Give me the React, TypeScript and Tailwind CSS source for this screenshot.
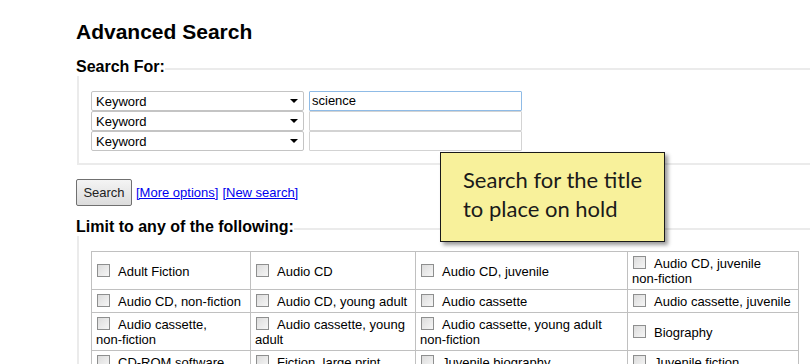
import React from 'react';

const rows: string[][] = [
  ['Adult Fiction', 'Audio CD', 'Audio CD, juvenile', 'Audio CD, juvenile non-fiction'],
  ['Audio CD, non-fiction', 'Audio CD, young adult', 'Audio cassette', 'Audio cassette, juvenile'],
  ['Audio cassette, non-fiction', 'Audio cassette, young adult', 'Audio cassette, young adult non-fiction', 'Biography'],
  ['CD-ROM software', 'Fiction, large print', 'Juvenile biography', 'Juvenile fiction'],
  ['Juvenile non-fiction', 'Large print', 'Music score', 'Non-fiction'],
];

const Legend: React.FC<{ text: string }> = ({ text }) => (
  <div className="flex items-start">
    <span className="text-[16px] leading-[18px] font-bold text-black whitespace-nowrap">{text}</span>
    <div className="flex-1 h-[2px] mt-[10px] bg-[#ebebeb]"></div>
  </div>
);

const Checkbox: React.FC = () => (
  <span className="inline-block w-[13px] h-[13px] ml-[1px] mr-[8px] align-[-1px] border border-[#8e8f8f] bg-gradient-to-br from-[#dcdcdc] to-[#f6f6f6]"></span>
);

// words with a hyphen should not break at the hyphen
const Label: React.FC<{ text: string }> = ({ text }) => (
  <>
    {text.split(' ').map((w, i) => (
      <React.Fragment key={i}>
        {i > 0 && ' '}
        {w.includes('-') ? <span className="whitespace-nowrap">{w}</span> : w}
      </React.Fragment>
    ))}
  </>
);

const SelectBox: React.FC = () => (
  <div className="flex items-center justify-between w-[213px] h-[20px] border border-[#c4c4c4] rounded-[2px] bg-white pl-[4px] pr-[5px]">
    <span className="text-[13px] leading-[15px] text-black">Keyword</span>
    <span className="w-0 h-0 border-l-[4px] border-r-[4px] border-t-[4px] border-l-transparent border-r-transparent border-t-black"></span>
  </div>
);

const App: React.FC = () => {
  const fields = ['science', '', ''];

  return (
    <div className="relative w-[810px] h-[364px] overflow-hidden bg-white font-['Liberation_Sans',Arial,sans-serif]">
      <div className="pl-[76px] pt-[20px]">
        <h1 className="text-[21px] leading-[23px] font-bold text-black">Advanced Search</h1>

        {/* Search For */}
        <div className="mt-[15px]">
          <Legend text="Search For:" />
          <div className="ml-[1px] border-l-2 border-b-2 border-[#ebebeb] pl-[12px] pt-[15px] pb-[12px]">
            {fields.map((v, i) => (
              <div key={i} className="flex gap-[5px]">
                <SelectBox />
                <div
                  className={`w-[213px] h-[20px] border rounded-[1px] pl-[2px] text-[13px] leading-[18px] text-black ${
                    i === 0 ? 'border-[#8fbbe6]' : 'border-[#d3d3d3]'
                  }`}
                >
                  {v}
                </div>
              </div>
            ))}
          </div>
        </div>

        {/* Buttons */}
        <div className="flex items-baseline mt-[14px] text-[13px] leading-[15px]">
          <button className="w-[56px] h-[27px] border border-[#707070] rounded-[2px] bg-gradient-to-b from-[#f4f4f4] to-[#dcdcdc] text-[#222] text-[13px]">
            Search
          </button>
          <a className="ml-[4px] text-[#0000ee] underline" href="#">[More options]</a>
          <a className="ml-[4px] text-[#0000ee] underline" href="#">[New search]</a>
        </div>

        {/* Limit */}
        <div className="mt-[12px]">
          <Legend text="Limit to any of the following:" />
          <div className="ml-[1px] border-l-2 border-[#ebebeb] pl-[12px] pt-[15px] pb-[12px]">
            <table className="table-fixed border-collapse w-[707px] text-[13px] leading-[15px] text-black">
              <colgroup>
                <col className="w-[159px]" />
                <col className="w-[165px]" />
                <col className="w-[212px]" />
                <col className="w-[171px]" />
              </colgroup>
              <tbody>
                {rows.map((r, i) => (
                  <tr key={i}>
                    {r.map((c) => (
                      <td key={c} className="border border-[#c0c0c0] align-middle pl-[4px] pr-[2px] pt-[4px] pb-[3px]">
                        <Checkbox />
                        <Label text={c} />
                      </td>
                    ))}
                  </tr>
                ))}
              </tbody>
            </table>
          </div>
        </div>
      </div>

      {/* Callout */}
      <div className="absolute left-[440px] top-[152px] w-[225px] h-[90px] border border-[#1a1a1a] bg-[#f8f19b] shadow-[3px_3px_4px_rgba(0,0,0,0.4)] pl-[22px] pt-[12px]">
        <p className="font-['Lato',sans-serif] text-[22px] leading-[29px] text-[#1a1a1a]">
          Search for the title
          <br />
          to place on hold
        </p>
      </div>
    </div>
  );
};

export default App;
